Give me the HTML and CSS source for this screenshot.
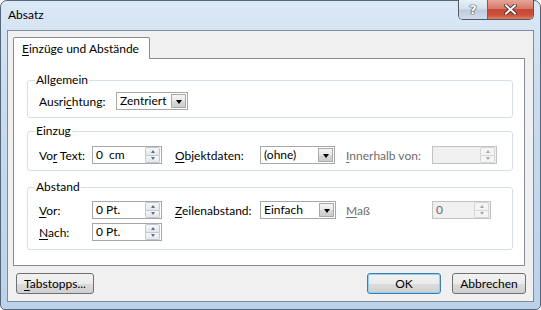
FILE: index.html
```html
<!DOCTYPE html>
<html lang="de">
<head>
  <meta charset="UTF-8">
  <title>Absatz</title>
  <link rel="stylesheet" href="styles.css">
</head>
<body>
  <div class="window">
    <div class="titlebar">
      <span class="title">Absatz</span>
      <div class="caption">
        <span class="cap help">?</span>
        <span class="cap close">
          <svg width="13" height="11" viewBox="0 0 13 11">
            <path d="M2 1.5 L11 9.5 M11 1.5 L2 9.5" stroke="#3a2a2a" stroke-width="3.6" stroke-linecap="square"/>
            <path d="M2 1.5 L11 9.5 M11 1.5 L2 9.5" stroke="#fff" stroke-width="2" stroke-linecap="square"/>
          </svg>
        </span>
      </div>
    </div>

    <div class="client">
      <div class="tabs">
        <span class="tab"><u>E</u>inzüge und Abstände</span>
      </div>

      <div class="panel">
        <fieldset class="group g-general">
          <legend>Allgemein</legend>
          <div class="row">
            <label class="lbl-align">Ausri<u>c</u>htung:</label>
            <div class="combo w-align"><span class="value">Zentriert</span><span class="drop"></span></div>
          </div>
        </fieldset>

        <fieldset class="group g-indent">
          <legend>Einzug</legend>
          <div class="grid">
            <label>Vo<u>r</u> Text:</label>
            <div class="spin"><span class="value">0&nbsp;&nbsp;cm</span><span class="arrows"><span class="up"></span><span class="down"></span></span></div>
            <label><u>O</u>bjektdaten:</label>
            <div class="combo w-obj"><span class="value">(ohne)</span><span class="drop"></span></div>
            <label class="disabled"><u>I</u>nnerhalb von:</label>
            <div class="spin disabled w-within"><span class="value"></span><span class="arrows"><span class="up"></span><span class="down"></span></span></div>
          </div>
        </fieldset>

        <fieldset class="group g-spacing">
          <legend>Abstand</legend>
          <div class="grid">
            <label><u>V</u>or:</label>
            <div class="spin"><span class="value">0 Pt.</span><span class="arrows"><span class="up"></span><span class="down"></span></span></div>
            <label><u>Z</u>eilenabstand:</label>
            <div class="combo w-line"><span class="value">Einfach</span><span class="drop"></span></div>
            <label class="disabled"><u>M</u>aß</label>
            <div class="spin disabled w-measure"><span class="value">0</span><span class="arrows"><span class="up"></span><span class="down"></span></span></div>

            <label><u>N</u>ach:</label>
            <div class="spin"><span class="value">0 Pt.</span><span class="arrows"><span class="up"></span><span class="down"></span></span></div>
          </div>
        </fieldset>
      </div>

      <div class="footer">
        <button class="btn w-tabs"><u>T</u>abstopps...</button>
        <span class="spacer"></span>
        <button class="btn default">OK</button>
        <button class="btn">Abbrechen</button>
      </div>
    </div>
  </div>
</body>
</html>
```

FILE: styles.css
```css
body {
  margin: 0;
  font-family: Lato, "Noto Sans", sans-serif;
  font-size: 12px;
  color: #000;
  background: #fff;
}

u {
  text-decoration-thickness: 1px;
  text-underline-offset: 2px;
}

.window {
  width: 541px;
  height: 310px;
  box-sizing: border-box;
  border: 1px solid #55657a;
  border-radius: 7px 7px 5px 5px;
  background: linear-gradient(180deg, #dbe8f6 0%, #c9dcf0 30%, #bcd2ea 100%);
  padding: 0 6px 7px 6px;
  display: flex;
  flex-direction: column;
}

/* title bar */
.titlebar {
  height: 29px;
  display: flex;
}

.title {
  padding: 6px 0 0 1px;
  line-height: 16px;
}

.caption {
  margin: -1px 0 0 auto;
  align-self: flex-start;
  display: flex;
  border: 1px solid #4c5a6c;
  border-top: none;
  border-radius: 0 0 5px 5px;
  overflow: hidden;
}

.cap {
  height: 19px;
  display: flex;
  align-items: center;
  justify-content: center;
}

.cap.help {
  width: 28px;
  border-right: 1px solid #5a6878;
  background: linear-gradient(180deg, #e8eff7 0%, #d2dfec 48%, #bccbdc 52%, #d0dceb 100%);
  color: #fff;
  font-family: "DejaVu Sans", sans-serif;
  font-weight: bold;
  font-size: 13px;
  text-shadow: 0 0 1px #333, 0 0 1px #333, 0 0 1px #333;
}

.cap.close {
  width: 45px;
  background: linear-gradient(180deg, #e7a597 0%, #d77a68 45%, #c64b36 50%, #cd4f38 78%, #e3805f 100%);
}

/* client area */
.client {
  flex: 1;
  border: 1px solid #7f8c9b;
  background: #f0f0f0;
  padding: 6px 8px 0 5px;
  display: flex;
  flex-direction: column;
}

.tabs {
  display: flex;
}

.tab {
  position: relative;
  z-index: 1;
  margin-bottom: -1px;
  height: 21px;
  line-height: 21px;
  padding: 0 10px 0 8px;
  white-space: nowrap;
  border: 1px solid #898c95;
  border-bottom: none;
  border-radius: 2px 2px 0 0;
  background: #fff;
}

.panel {
  flex: 1;
  border: 1px solid #898c95;
  background: #fff;
  padding: 13px 11px 0 13px;
}

/* group boxes */
.group {
  margin: 0;
  min-width: 0;
  border: 1px solid #d5dfe5;
  border-radius: 3px;
  padding: 4px 10px 7px 11px;
}

.group legend {
  margin-left: -4px;
  padding: 0 1px;
  line-height: 16px;
}

.g-indent {
  margin-top: 5px;
  padding-top: 7px;
  padding-bottom: 6px;
}

.g-spacing {
  margin-top: 8px;
  padding-top: 6px;
  padding-bottom: 8px;
}

.row {
  display: flex;
  align-items: center;
}

.lbl-align {
  width: 77px;
}

.grid {
  display: grid;
  grid-template-columns: 53px 83px 85px 86px 86px 1fr;
  row-gap: 4px;
  align-items: center;
}

.disabled {
  color: #6d6d6d;
}

/* combo box */
.combo {
  height: 18px;
  box-sizing: border-box;
  border: 1px solid #a7a7a7;
  background: #fff;
  display: flex;
  align-items: center;
}

.combo .value {
  flex: 1;
  padding-left: 3px;
  line-height: 16px;
}

.combo .drop {
  width: 15px;
  height: 14px;
  box-sizing: border-box;
  margin-right: 1px;
  border: 1px solid #a9a9a9;
  background: linear-gradient(180deg, #f4f4f4 0%, #e8e8e8 50%, #d9d9d9 51%, #cdcdcd 100%);
  display: flex;
  align-items: center;
  justify-content: center;
}

.combo .drop::after {
  content: "";
  border-left: 3.5px solid transparent;
  border-right: 3.5px solid transparent;
  border-top: 4px solid #000;
  margin-top: 1px;
}

.w-align { width: 72px; }
.w-obj { width: 75px; }
.w-line { width: 76px; }

/* spin box */
.spin {
  width: 70px;
  height: 18px;
  box-sizing: border-box;
  border: 1px solid #a7a7a7;
  background: #fff;
  display: flex;
}

.spin .value {
  flex: 1;
  padding-left: 3px;
  line-height: 16px;
}

.spin .arrows {
  width: 15px;
  display: flex;
  flex-direction: column;
  padding: 0 1px 0 0;
}

.spin .up,
.spin .down {
  flex: 1;
  box-sizing: border-box;
  border: 1px solid #c3c8cf;
  background: linear-gradient(180deg, #f6f7f9, #e3e7ec);
  display: flex;
  align-items: center;
  justify-content: center;
}

.spin .up { border-radius: 2px 2px 0 0; }
.spin .down { border-radius: 0 0 2px 2px; border-top: none; }

.spin .up::after {
  content: "";
  border-left: 2.5px solid transparent;
  border-right: 2.5px solid transparent;
  border-bottom: 3px solid #5e6f86;
}

.spin .down::after {
  content: "";
  border-left: 2.5px solid transparent;
  border-right: 2.5px solid transparent;
  border-top: 3px solid #5e6f86;
}

.spin.disabled {
  border-color: #c2c2c2;
  background: #f0f0f0;
}

.spin.disabled .value {
  color: #6d6d6d;
}

.spin.disabled .up,
.spin.disabled .down {
  border-color: #d6d6d6;
  background: #f4f4f4;
}

.spin.disabled .up::after { border-bottom-color: #a8a8a8; }
.spin.disabled .down::after { border-top-color: #a8a8a8; }

.w-within { width: 65px; }
.w-measure { width: 59px; }

/* footer buttons */
.footer {
  display: flex;
  padding: 7px 0 7px 0;
  margin: 0 -1px 0 3px;
  gap: 11px;
}

.spacer {
  flex: 1;
}

.btn {
  width: 74px;
  height: 21px;
  padding: 0;
  font: inherit;
  color: #000;
  border: 1px solid #707070;
  border-radius: 3px;
  background: linear-gradient(180deg, #f2f2f2 0%, #ebebeb 50%, #dddddd 51%, #cfcfcf 100%);
}

.btn.w-tabs {
  width: 78px;
}

.btn.default {
  border-color: #3c7fb1;
  box-shadow: inset 0 0 0 1px #8fd2f0;
}
```
